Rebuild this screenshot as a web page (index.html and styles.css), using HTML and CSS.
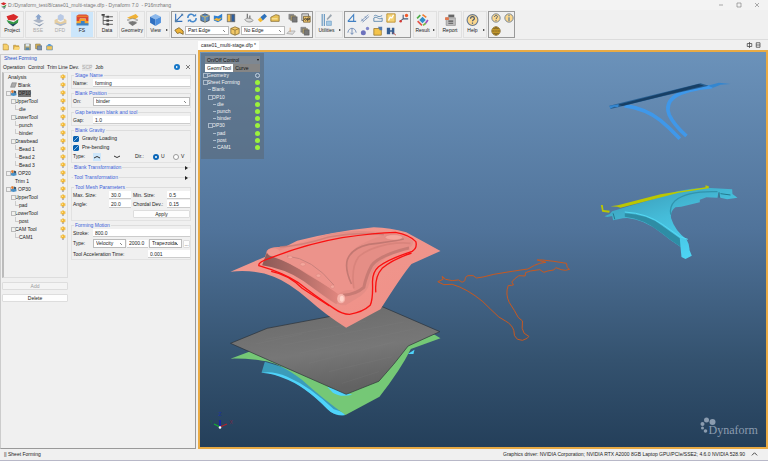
FILE: index.html
```
<!DOCTYPE html>
<html lang="en">

<head>
    <meta charset="UTF-8">
    <title>Dynaform 7.0</title>
    <link rel="stylesheet" href="styles.css">
</head>

<body>

    <!-- shared icons -->
    <svg class="defs" width="0" height="0">
        <symbol id="bulb" viewBox="0 0 12 12">
            <path d="M6 0v2M1 2l1.500 1.500M11 2L9.500 3.500M0 6h2M10 6h2" stroke="#e8b848" stroke-width="1.500"/>
            <circle cx="6" cy="5.500" r="4" fill="#f3b52c"/><circle cx="5" cy="4.500" r="1.500" fill="#ffe79a"/>
            <path d="M4.500 9h3v2.500h-3z" fill="#8a8a94"/>
        </symbol>
        <symbol id="cube" viewBox="0 0 24 24">
            <path d="M12 1l10 5-10 5L2 6z" fill="#8db9ec"/><path d="M2 6l10 5v12L2 17z" fill="#2f6fc0"/><path d="M22 6l-10 5v12l10-6z" fill="#4d8fdd"/>
        </symbol>
        <symbol id="question" viewBox="0 0 24 24">
            <circle cx="12" cy="12" r="10" fill="#fbd78d" stroke="#68788c" stroke-width="2"/>
            <path d="M8.500 9.500c0-5 7-4.500 7-.5 0 2.500-3.500 2.500-3.500 5.500M12 16.500v2.500" fill="none" stroke="#46566c" stroke-width="2.200"/>
        </symbol>
        <symbol id="stack" viewBox="0 0 24 24">
            <path d="M2 3h12v12H2z" fill="#8d8d8d" stroke="#666"/><path d="M6 6h12v12H6z" fill="#b3a06c" stroke="#666"/><path d="M10 9h12v13H10z" fill="#777" stroke="#444"/>
        </symbol>
        <symbol id="op" viewBox="0 0 18 16">
            <path d="M1 9l7-3 9 3v5l-8 2-8-2z" fill="#4990c6"/><path d="M2 2l6-2 2 5-5 4z" fill="#e77a2d"/><path d="M10 1l6 2v6l-6-2z" fill="#35566f"/>
        </symbol>
    </svg>

    <header class="titlebar">
        <svg class="logo" viewBox="0 0 24 24"><path d="M2 6l10-5 10 4-9 6z" fill="#d32b2b"/><path d="M2 12l8 3 12-6-2 6-9 4z" fill="#348c3b"/><path d="M5 18l7 2 8-3-5 6z" fill="#22435a"/></svg>
        <h1>D:/Dynaform_test/8/case01_multi-stage.dfp - Dynaform 7.0 &nbsp;- P16mzhang</h1>
        <div class="window-buttons">
            <button aria-label="Minimize"><svg viewBox="0 0 6 6"><path d="M1 3h4"/></svg></button>
            <button aria-label="Maximize"><svg viewBox="0 0 6 6"><path d="M1 1h4v4H1z"/></svg></button>
            <button aria-label="Close"><svg viewBox="0 0 6 6"><path d="M1 1l4 4M5 1L1 5"/></svg></button>
        </div>
    </header>

    <nav class="toolbar">
        <div class="group">
            <button class="tool"><svg viewBox="0 0 24 24"><path d="M1 5l13-4 9 5-7 7-12-1z" fill="#d82a2a"/><path d="M1 12l6 2 7 2 9-6-1 7-8 5-10-5z" fill="#349744"/><path d="M4 17l8 3 9-3-8 7z" fill="#234b60"/></svg>Project</button>
        </div>
        <div class="group wide">
            <button class="tool off"><svg viewBox="0 0 24 24"><path d="M6 7l6-6 6 6h-3v5H9V7z" fill="#8ba5cc"/><path d="M2 13l9-3 11 3-9 5z" fill="#aab4c5"/><path d="M1 17l12 4 10-4-9 7z" fill="#8b9ab0"/></svg>BSE</button>
            <button class="tool off"><svg viewBox="0 0 24 24"><path d="M7 4l5-3 6 3v7l-6 3-5-3z" fill="#b9c9e4"/><path d="M1 12l6-3v5l5 2 6-2V9l5 3v7l-11 4-11-4z" fill="#e5cda0"/><path d="M3 17l9 3 10-3v2l-10 4-9-4z" fill="#a9b9d4"/></svg>DFD</button>
            <button class="tool on"><svg viewBox="0 0 24 24"><path d="M1 4l4-2h14l4 2v10h-5V9H7v5H1z" fill="#dc4631"/><path d="M1 14h5v-3l3-2h7l3 3v2h4v6H1z" fill="#f4a22b"/><path d="M1 18h8v-4h7v4h7v4H1z" fill="#3c83c5"/><path d="M2 5h20" stroke="#f4a22b" stroke-width="1.500"/></svg>FS</button>
        </div>
        <div class="group slim">
            <button class="tool"><svg viewBox="0 0 24 24"><path d="M4 2v18h7M4 6h7M4 13h7M15 6h7M15 13h7M15 20h7" stroke="#444" fill="none" stroke-width="1.500"/><g fill="#444"><path d="M1 1h6v3H1zM10 4h5v4h-5zM10 11h5v4h-5zM10 18h5v4h-5z"/></g></svg>Data</button>
        </div>
        <div class="group wide">
            <button class="tool"><svg viewBox="0 0 24 24"><path d="M2 8l16-7 5 5-9 7z" fill="#f0b237"/><path d="M2 12l10-3 10 3-10 5z" fill="#ececec" stroke="#777"/><path d="M4 17l8-3 9 3-9 6z" fill="#777"/></svg>Geometry</button>
        </div>
        <div class="group more">
            <button class="tool"><svg><use href="#cube"/></svg>View</button>
        </div>

        <div class="box edit">
            <div class="line">
                <svg viewBox="0 0 12 12"><path d="M2 1v9h8M2 10l8-8" stroke="#2e6cb8" stroke-width="1.300" fill="none"/><path d="M8 1h3v3zM1 8h3v3H1z" fill="#507da7"/></svg>
                <svg viewBox="0 0 12 12"><path d="M1 6c0-5 6-6 8-2M11 6c0 5-6 6-8 2" stroke="#4689cd" stroke-width="1.800" fill="none"/><path d="M7 4h4V1zM5 8H1v3z" fill="#4689cd"/></svg>
                <svg viewBox="0 0 12 12"><path d="M6 1l5 2v6l-5 2-5-2V3z" fill="#5a8cc3" stroke="#3c4c5d"/><path d="M1 3l5 2 5-2M6 5v6" stroke="#e2bd58" fill="none"/></svg>
                <svg viewBox="0 0 12 12"><path d="M1 3l5 1 5-3v7l-5 3-5-2z" fill="#2e7fd1"/><path d="M1 8l3-2 3 1 4-2-4 5z" fill="#f2b337"/></svg>
                <svg viewBox="0 0 12 12"><path d="M1 1h10v10H1z" fill="#777"/><path d="M2 2h3v8H2z" fill="#f2bf4e"/><path d="M7 2h3v8H7z" fill="#2e5f9e"/></svg>
                <i class="sep"></i>
                <svg viewBox="0 0 12 12"><path d="M4 1v6M7 3v5" stroke="#777" stroke-width="1.500"/><path d="M1 8c2-3 8-2 10 1-3 3-8 2-10-1z" fill="#ddd" stroke="#888"/></svg>
                <svg viewBox="0 0 12 12"><path d="M4 5l5-4 3 3-5 5z" fill="#2f72ba"/><path d="M1 8l3-3 3 4-3 2z" fill="#f3ba35"/></svg>
                <svg viewBox="0 0 12 12"><path d="M1 5l6-3 4 1v7H1z" fill="#e8c157" stroke="#8d7236"/><path d="M2 7h7" stroke="#fff4bd"/></svg>
                <i class="sep"></i>
                <svg><use href="#stack"/></svg>
                <svg viewBox="0 0 12 12"><path d="M1 1h8v8H1z" fill="#ddd" stroke="#666"/><path d="M3 4h8v7H3z" fill="#f6c96a" stroke="#766136"/><circle cx="5.500" cy="7.500" r="1.200" fill="none" stroke="#333"/><path d="M8 10V6h2v2H8" fill="none" stroke="#333"/></svg>
            </div>
            <div class="line">
                <svg viewBox="0 0 12 12"><path d="M1 5l5-3 5 4v4l-4-2-3 1z" fill="#edb33a" stroke="#7c6229"/></svg>
                <select class="pick" aria-label="Part edge"><option>Part Edge</option></select>
                <svg viewBox="0 0 12 12"><path d="M6 1l5 2v6l-5 2-5-2V3z" fill="#f2c867" stroke="#8d7236"/><path d="M1 3l5 2 5-2M6 5v6" stroke="#8d7236" fill="none"/></svg>
                <select class="pick" aria-label="No edge"><option>No Edge</option></select>
                <svg viewBox="0 0 12 12"><path d="M1 9l3-3h7l-3 4z" fill="#ddd" stroke="#aaa"/><path d="M5 2v5" stroke="#e0a05e"/></svg>
                <svg class="last"><use href="#stack"/></svg>
            </div>
        </div>

        <div class="group more roomy">
            <button class="tool"><svg viewBox="0 0 24 24"><path d="M4 1v22M8 1v22" stroke="#5e91bd" stroke-width="2"/><path d="M12 10L20 1l2 3-8 8z" fill="#9ba5af"/><path d="M12 14h9v8h-9z" fill="#a6cae4" stroke="#5e91bd"/></svg>Utilities</button>
        </div>

        <div class="box measure">
            <div class="line">
                <svg viewBox="0 0 12 12"><path d="M1 10h10M1 10l7-8v8" stroke="#4180c3" stroke-width="1.300" fill="none"/></svg>
                <svg viewBox="0 0 12 12"><path d="M1 10l9-8M3 11l8-7M2 7l2 3M6 4l2 3" stroke="#738fb7" fill="none"/></svg>
                <svg viewBox="0 0 12 12"><path d="M1 4c3-4 4 3 10-1M1 10V6c4-3 5 3 10 0v4z" stroke="#527fa9" fill="none"/></svg>
                <svg viewBox="0 0 12 12"><path d="M1 1h10v10H1z" fill="#f4d274" stroke="#b88c2d"/><path d="M3 9l2-4 2 1 2-4" stroke="#fff" fill="none" stroke-width="1.500"/></svg>
                <svg viewBox="0 0 12 12"><path d="M5 2v5l-4 3M5 7h6" stroke="#485b76" fill="none" stroke-width="1.300"/><circle cx="9" cy="3" r="2" fill="#f1592b"/><circle cx="2" cy="10" r="1.500" fill="#d73a35"/></svg>
            </div>
            <div class="line">
                <svg viewBox="0 0 12 12"><path d="M1 8c1-7 9-7 10 0M6 3v7M4 8l2 2 2-2" stroke="#6381b0" fill="none"/></svg>
                <svg viewBox="0 0 12 12"><circle cx="4" cy="8" r="3" fill="#6d72bd"/><circle cx="9" cy="3" r="2" fill="#8288cc"/></svg>
                <svg viewBox="0 0 12 12"><path d="M1 3h9v8H1z" fill="#f4c44c" stroke="#9c7d36"/><path d="M6 1h5v4H8z" fill="#557caf"/></svg>
                <svg viewBox="0 0 12 12"><path d="M1 2h4v3h2V2h3v8H7V7H5v3H1z" fill="#345e93"/><path d="M8 8l4 3" stroke="#c04c3e"/></svg>
            </div>
        </div>

        <div class="group more">
            <button class="tool"><svg viewBox="0 0 24 24"><path d="M12 6l6 6-6 6-6-6z" fill="#308fc8"/><g fill="none" stroke-width="3"><path d="M2 9l6-6" stroke="#4fae49"/><path d="M12 2l7 5" stroke="#ef7d32"/><path d="M22 12l-5 7" stroke="#a04dc1"/><path d="M3 14l8 8" stroke="#e45348"/><path d="M13 22l5-4" stroke="#79bc49"/></g></svg>Result</button>
        </div>
        <div class="group">
            <button class="tool"><svg viewBox="0 0 24 24"><path d="M4 8h17v14H4z" fill="#bfbfbf" stroke="#777"/><path d="M8 2h11v5H8z" fill="#666"/><path d="M2 7h7v5H2z" fill="#e0754b"/><path d="M8 14h9M8 18h9" stroke="#555" stroke-width="2"/></svg>Report</button>
        </div>
        <div class="group more">
            <button class="tool"><svg><use href="#question"/></svg>Help</button>
        </div>

        <div class="box help">
            <div class="line">
                <svg><use href="#question"/></svg>
                <svg viewBox="0 0 24 24"><circle cx="12" cy="12" r="10" fill="#fbd78d" stroke="#68788c" stroke-width="2"/><path d="M12 5v3M12 10v9" stroke="#5f7f9c" stroke-width="3"/></svg>
            </div>
            <div class="line">
                <svg viewBox="0 0 24 24"><circle cx="12" cy="12" r="10" fill="#e2af2b" stroke="#775e26" stroke-width="2"/><path d="M2 12h20M12 2v20M5 6h14M5 18h14M12 2c-7 5-7 15 0 20M12 2c7 5 7 15 0 20" stroke="#775e26" stroke-width="1.500" fill="none"/></svg>
            </div>
        </div>
    </nav>

    <main class="workspace">
        <section class="side">
            <div class="filebar">
                <svg viewBox="0 0 12 12"><path d="M2 1h6l3 3v7H2z" fill="#f8d16b" stroke="#a98437"/></svg>
                <svg viewBox="0 0 12 12"><path d="M1 3h4l1 1h4v6H1z" fill="#e3b445" stroke="#a98437"/><path d="M3 6h9l-2 5H1z" fill="#fad778"/></svg>
                <svg viewBox="0 0 12 12"><path d="M1 1h10v10H1z" fill="#b6a66f" stroke="#69777c"/><path d="M3 1h6v4H3z" fill="#dce7ee"/><path d="M3 7h6v4H3z" fill="#5688ad"/></svg>
                <svg viewBox="0 0 12 12"><path d="M1 1h8v8H1z" fill="#e2b64e" stroke="#7b7047"/><path d="M4 4h8v7H4z" fill="#7e94ad" stroke="#59687c"/></svg>
                <svg viewBox="0 0 12 12"><path d="M1 4h10v7H1z" fill="#f0c45b" stroke="#4a82b0"/><path d="M2 4c1-4 5-4 7-2l1 2" fill="#4b93d4"/></svg>
            </div>

            <div class="dock">
                <h2>Sheet Forming</h2>
                <div class="tabs">
                    <button class="active">Operation</button>
                    <button>Control</button>
                    <button>Trim Line Dev.</button>
                    <button class="off" disabled>SCP</button>
                    <button>Job</button>
                    <span class="dock-buttons">
                        <svg viewBox="0 0 12 12"><circle cx="6" cy="6" r="6" fill="#1476c8"/><path d="M4 3.500l4 2.500-4 2.500z" fill="#fff"/></svg>
                        <svg viewBox="0 0 12 12"><path d="M2 2l8 8M10 2l-8 8" stroke="#555" stroke-width="1.500"/></svg>
                    </span>
                </div>

                <div class="columns">
                    <div class="left">
                        <ul class="tree">
                            <li class="l0"><span>Analysis</span><svg><use href="#bulb"/></svg></li>
                            <li class="l1"><svg class="op" viewBox="0 0 18 16"><path d="M5 2h12l-4 12H1z" fill="#aaa" stroke="#555"/></svg><span>Blank</span><svg><use href="#bulb"/></svg></li>
                            <li class="l1 open"><svg class="op"><use href="#op"/></svg><span class="selected">OP10</span><svg><use href="#bulb"/></svg></li>
                            <li class="l2 open"><span>UpperTool</span><svg><use href="#bulb"/></svg></li>
                            <li class="l3"><span>die</span><svg><use href="#bulb"/></svg></li>
                            <li class="l2 open"><span>LowerTool</span><svg><use href="#bulb"/></svg></li>
                            <li class="l3"><span>punch</span><svg><use href="#bulb"/></svg></li>
                            <li class="l3"><span>binder</span><svg><use href="#bulb"/></svg></li>
                            <li class="l2 open"><span>Drawbead</span><svg><use href="#bulb"/></svg></li>
                            <li class="l3"><span>Bead 1</span><svg><use href="#bulb"/></svg></li>
                            <li class="l3"><span>Bead 2</span><svg><use href="#bulb"/></svg></li>
                            <li class="l3"><span>Bead 3</span><svg><use href="#bulb"/></svg></li>
                            <li class="l1 open"><svg class="op"><use href="#op"/></svg><span>OP20</span><svg><use href="#bulb"/></svg></li>
                            <li class="l2"><span>Trim 1</span><svg><use href="#bulb"/></svg></li>
                            <li class="l1 open"><svg class="op"><use href="#op"/></svg><span>OP30</span><svg><use href="#bulb"/></svg></li>
                            <li class="l2 open"><span>UpperTool</span><svg><use href="#bulb"/></svg></li>
                            <li class="l3"><span>pad</span><svg><use href="#bulb"/></svg></li>
                            <li class="l2 open"><span>LowerTool</span><svg><use href="#bulb"/></svg></li>
                            <li class="l3"><span>post</span><svg><use href="#bulb"/></svg></li>
                            <li class="l2 open"><span>CAM Tool</span><svg><use href="#bulb"/></svg></li>
                            <li class="l3"><span>CAM1</span><svg><use href="#bulb"/></svg></li>
                        </ul>
                        <button class="push" disabled>Add</button>
                        <button class="push">Delete</button>
                    </div>

                    <form class="right">
                        <fieldset>
                            <legend>Stage Name</legend>
                            <div class="row"><label for="name">Name:</label><input id="name" type="text" value="forming"></div>
                        </fieldset>
                        <fieldset>
                            <legend>Blank Position</legend>
                            <div class="row tall"><label for="on">On:</label><select id="on"><option>binder</option></select></div>
                        </fieldset>
                        <fieldset>
                            <legend>Gap between blank and tool</legend>
                            <div class="row"><label for="gap">Gap:</label><input id="gap" type="text" value="1.0"></div>
                        </fieldset>
                        <fieldset>
                            <legend>Blank Gravity</legend>
                            <div class="row tall"><input id="gravity" type="checkbox" checked><label for="gravity" class="auto">Gravity Loading</label></div>
                            <div class="row tall"><input id="bend" type="checkbox" checked><label for="bend" class="auto">Pre-bending</label></div>
                            <div class="row tall">
                                <label>Type:</label>
                                <button type="button" class="curve on" aria-label="Up"><svg viewBox="0 0 8 8"><path d="M1 5q3-3 6 0"/></svg></button>
                                <button type="button" class="curve" aria-label="Down"><svg viewBox="0 0 8 8"><path d="M1 3q3 3 6 0"/></svg></button>
                                <span class="dir">Dir.:</span>
                                <input id="u" type="radio" name="dir" checked><label for="u" class="uv">U</label>
                                <input id="v" type="radio" name="dir"><label for="v" class="uv">V</label>
                            </div>
                        </fieldset>
                        <fieldset class="closed"><legend>Blank Transformation</legend><i></i></fieldset>
                        <fieldset class="closed"><legend>Tool Transformation</legend><i></i></fieldset>
                        <fieldset>
                            <legend>Tool Mesh Parameters</legend>
                            <div class="mesh">
                                <label for="max">Max. Size:</label><input id="max" type="text" value="30.0">
                                <label for="min">Min. Size:</label><input id="min" type="text" value="0.5">
                                <label for="angle">Angle:</label><input id="angle" type="text" value="20.0">
                                <label for="chord">Chordal Dev.:</label><input id="chord" type="text" value="0.15">
                                <button type="button" class="push apply">Apply</button>
                            </div>
                        </fieldset>
                        <fieldset>
                            <legend>Forming Motion</legend>
                            <div class="row"><label for="stroke">Stroke:</label><input id="stroke" type="text" value="800.0"></div>
                            <div class="row motion">
                                <label for="type">Type:</label><select id="type"><option>Velocity</option></select>
                                <input type="text" value="2000.0" aria-label="Velocity">
                                <select class="shape" aria-label="Profile"><option>Trapezoida</option></select>
                                <button type="button" class="push dots">...</button>
                            </div>
                            <div class="row"><label for="time" class="long">Tool Acceleration Time:</label><input id="time" type="text" value="0.001"></div>
                        </fieldset>
                    </form>
                </div>
            </div>
        </section>

        <section class="document">
            <div class="doc-tabs">
                <span class="doc-tab">case01_multi-stage.dfp *</span>
                <svg viewBox="0 0 20 8"><path d="M1 2h6v4H1zM4 0v8M13 1h5v6h-5zM13 4h5" stroke="#444" fill="none"/></svg>
            </div>
            <div class="view">
                <svg class="scene" viewBox="200 52 565 395">
                    <defs>
                        <linearGradient id="pink" x1="0" y1="0" x2="1" y2="1"><stop offset="0" stop-color="#f19b92"/><stop offset="1" stop-color="#ef8f86"/></linearGradient>
                        <linearGradient id="wall" x1="0" y1="0" x2="1" y2="0"><stop offset="0" stop-color="#8c5a57"/><stop offset=".6" stop-color="#b9716b"/><stop offset="1" stop-color="#e0867e"/></linearGradient>
                        <linearGradient id="steel" x1="0" y1="0" x2="0.300" y2="1"><stop offset="0" stop-color="#696969"/><stop offset=".6" stop-color="#777"/><stop offset="1" stop-color="#626262"/></linearGradient>
                        <linearGradient id="aqua" x1="0" y1="0" x2=".6" y2="1"><stop offset="0" stop-color="#3995b1"/><stop offset=".5" stop-color="#45bcd9"/><stop offset="1" stop-color="#4dd4f4"/></linearGradient>
                    </defs>

                    <!-- die, blank and punch stack -->
                    <g transform="translate(225 220) scale(.3333)">
                        <path d="M118 425L200 450L300 520L355 586Q330 588 312 572Q235 495 175 472Q145 460 108 458z" fill="#3b9cba"/>
                        <path d="M108 458Q145 452 185 470Q255 500 325 568L358 578V586Q325 588 305 567Q235 496 175 475Q150 462 108 458z" fill="#4fd4fb"/>
                        <path d="M15 416L75 394L625 343L645 355L556 387Q525 450 462 530L360 585Q290 535 230 480Q160 426 110 422Q65 415 15 416z" fill="#75c876"/>
                        <path d="M305 500L380 524Q345 533 322 518z" fill="#4fd4fb"/>
                        <path d="M547 402l20-13-3 13z" fill="#4fd4fb"/>
                        <path d="M15 370L125 325L470 260L643 335L548 378Q505 435 460 484L362 523z" fill="url(#steel)" stroke="#2b3036" stroke-width="2"/>
                        <path d="M120 358L420 304M170 376L535 306M220 400L570 326M250 430L510 365M310 455L500 410M90 372L230 342M350 490L460 455" stroke="#858585" stroke-width="1" opacity=".5"/>
                        <path d="M15 155L120 110L215 62Q330 34 445 22Q495 24 542 37Q590 63 645 93L558 132Q530 165 465 268L362 323Q300 284 250 239Q190 187 145 170Q90 148 15 155z" fill="url(#pink)"/>
                        <path d="M112 135Q119 110 124 92Q135 80 160 81Q215 78 300 44Q400 25 475 38Q540 42 562 62Q566 78 545 87Q480 105 452 140Q437 157 432 190Q425 220 390 238L360 256Q342 256 320 246Q260 203 224 173Q175 143 112 135z" fill="#e58e86"/>
                        <path d="M110 136L124 98L145 112Q190 126 245 163Q291 190 336 218Q340 240 333 253Q300 232 235 184Q180 146 110 136z" fill="url(#wall)"/>
                        <path d="M135 104Q220 63 310 46Q410 30 480 45Q440 54 402 76Q356 106 369 155Q381 185 386 212Q360 206 338 222Q270 175 230 151Q185 124 135 104z" fill="#ec938b"/>
                        <path d="M163 81Q230 77 310 51Q400 35 475 44" fill="none" stroke="#c87a74" stroke-width="5" opacity=".7"/>
                        <path d="M378 192Q357 146 366 118Q380 83 430 73Q495 66 535 57" fill="none" stroke="#b46f69" stroke-width="5" opacity=".7"/>
                        <path d="M385 205Q376 142 399 111Q425 86 485 73Q530 66 555 70" fill="none" stroke="#d9847c" stroke-width="5"/>
                        <path d="M353 226Q393 222 415 202Q423 165 439 136Q461 106 551 84" fill="none" stroke="#b46e69" stroke-width="9" opacity=".6"/>
                        <path d="M185 108Q260 115 325 195" fill="none" stroke="#c9817b" stroke-width="3"/>
                        <g fill="#f4a69c" stroke="#cf8079" stroke-width="1"><ellipse cx="194" cy="112" rx="7" ry="4"/><ellipse cx="232" cy="133" rx="8" ry="5"/><ellipse cx="279" cy="167" rx="7" ry="5"/><ellipse cx="321" cy="200" rx="6" ry="5"/><ellipse cx="505" cy="52" rx="26" ry="8"/></g>
                        <ellipse cx="144" cy="97" rx="19" ry="12" fill="#ef9990"/>
                        <ellipse cx="347" cy="236" rx="12" ry="14" fill="#f5b3aa"/>
                        <ellipse cx="349" cy="236" rx="6" ry="9" fill="#ffd5cb"/>
                        <path d="M100 137Q97 127 130 116Q240 72 350 53Q450 38 510 37Q552 44 571 65Q576 84 560 94Q490 117 459 140Q441 156 441 185Q443 239 434 256Q412 277 372 283Q350 283 326 266Q265 225 217 187Q170 157 100 137z" fill="none" stroke="#fa1111" stroke-width="4"/>
                        <path d="M137 154Q190 164 230 205L312 258M451 217Q447 170 470 145Q500 119 558 99" fill="none" stroke="#fa1111" stroke-width="4"/>
                    </g>

                    <g transform="translate(430 70) scale(.3333)">
                        <!-- trim curve -->
                        <path d="M22 635L38 628L35 619L45 628L65 632L84 630L95 637L103 632L105 622L112 617L128 617L138 624L158 621L190 613L245 604L292 597L312 586L328 580L346 577L320 570L335 570L370 574L408 580L410 592L417 598L405 601L392 599L376 593L370 600L352 603L340 607L328 599L300 603L285 608L284 618L265 617L252 627L244 636L249 645L233 647Q224 672 236 697L252 722L263 742L276 753L275 775L281 790L295 799L290 805L276 811L261 808L252 797L250 782Q245 764 225 753L205 741Q180 718 157 695Q110 656 65 643L40 644z" fill="none" stroke="#c8581f" stroke-width="3"/>
                        <!-- upper pad -->
                        <path d="M582 107Q645 116 690 151Q720 176 748 206" fill="none" stroke="#3f98ea" stroke-width="11"/>
                        <path d="M845 50Q762 58 731 81Q704 102 716 134Q730 164 768 198" fill="none" stroke="#3f98ea" stroke-width="11"/>
                        <path d="M537 107L555 103L810 40L835 47L700 78L556 113L540 117z" fill="#285f91"/>
                        <path d="M562 104L805 42L820 47L575 108z" fill="#173f65"/>
                        <path d="M832 47L865 38L900 42L870 44L848 53zM537 107l28-4-2 9-12-2-12 6z" fill="#3486cf"/>
                        <!-- lower post -->
                        <path d="M522 439L538 432L545 424L580 413L680 384L740 364Q785 353 840 354L905 358L906 372L921 383L890 388L870 383L864 366L861 383L828 382L808 389V397L752 410L735 412Q718 425 722 445Q733 482 768 508Q778 525 777 540L784 557L765 567L753 561L750 530Q720 512 690 487Q640 448 590 444L577 445L548 451L545 438L530 441z" fill="url(#aqua)"/>
                        <path d="M583 430Q650 433 695 467L748 505L750 530Q720 512 690 487Q640 446 583 440z" fill="#2e8da5"/>
                        <path d="M861 365Q770 362 734 392Q716 410 721 434" fill="none" stroke="#3194ad" stroke-width="4"/>
                        <path d="M583 426Q650 430 697 464L748 500L772 508" fill="none" stroke="#54d9f4" stroke-width="3"/>
                        <path d="M866 367v16M870 371l30 4M548 430l5 18" stroke="#22798e" stroke-width="3"/>
                        <path d="M511 405h6l2 15 19 2-2 6-21-3zM540 409L562 406L690 373L825 352V346L835 349V355L745 368L570 413L560 410z" fill="#bbc702"/>
                    </g>

                    <!-- axis triad -->
                    <g fill="none" stroke-width="1.300"><path d="M219.500 427v-7" stroke="#1414c8"/><path d="M219.500 427l7-3" stroke="#b3222d"/><path d="M219.500 427l-6-3" stroke="#15ad31"/></g>
                    <circle cx="219.500" cy="427.500" r="1.300" fill="#fff"/>
                    <g font-size="5"><text x="218" y="416" fill="#1b2fa0">Z</text><text x="229" y="424" fill="#7a2742">X</text><text x="209" y="424" fill="#17683c">Y</text></g>

                    <!-- brand -->
                    <g fill="#8b9caf"><circle cx="702" cy="424" r="2"/><circle cx="706" cy="420" r="2.500"/><circle cx="712" cy="422" r="3"/><circle cx="702" cy="428" r="1.500"/><circle cx="705" cy="431" r="1.800"/></g>
                    <text class="brand" x="708" y="434">Dynaform</text>
                </svg>

                <div class="control">
                    <button class="control-head">On/Off Control</button>
                    <div class="control-tabs"><button class="active">Geom/Tool</button><button>Curve</button></div>
                    <ul>
                        <li class="c0 open">Geometry<i class="hollow"></i></li>
                        <li class="c0 open">Sheet Forming<i></i></li>
                        <li class="c1">Blank<i></i></li>
                        <li class="c1 open">OP10<i></i></li>
                        <li class="c2">die<i></i></li>
                        <li class="c2">punch<i></i></li>
                        <li class="c2">binder<i></i></li>
                        <li class="c1 open">OP30<i></i></li>
                        <li class="c2">pad<i></i></li>
                        <li class="c2">post<i></i></li>
                        <li class="c2">CAM1<i></i></li>
                    </ul>
                </div>
            </div>
        </section>
    </main>

    <footer class="status">
        <span>|| Sheet Forming</span>
        <span class="driver">Graphics driver: NVIDIA Corporation; NVIDIA RTX A2000 8GB Laptop GPU/PCIe/SSE2; 4.6.0 NVIDIA 528.90</span>
        <svg viewBox="0 0 8 8"><path d="M1 5l3-3 3 3" stroke="#333" fill="none"/></svg>
    </footer>

</body>

</html>
```
FILE: styles.css
```
* {
    box-sizing: border-box;
}

body {
    margin: 0;
    height: 100vh;
    display: flex;
    flex-direction: column;
    overflow: hidden;
    background: #f0f0f0;
    color: #222;
    font: 5px/7px "Liberation Sans", Arial, sans-serif;
}

button, input, select {
    font: inherit;
    color: inherit;
    margin: 0;
    padding: 0;
    border: 0;
    background: none;
}

h1, h2, ul {
    margin: 0;
    padding: 0;
    font: inherit;
    list-style: none;
}

svg {
    display: block;
    flex: none;
}

.defs {
    position: absolute;
}

/* title bar */
.titlebar {
    display: flex;
    align-items: center;
    height: 10px;
    flex: none;
    background: #f3f3f3;
    color: #777;
}

.logo {
    width: 7px;
    height: 7px;
    margin-right: 1px;
}

.window-buttons {
    display: flex;
    gap: 12px;
    margin-left: auto;
    padding-right: 8px;
}

.window-buttons svg {
    width: 6px;
    height: 6px;
    fill: none;
    stroke: #777;
    stroke-width: .6;
}

/* toolbar */
.toolbar {
    display: flex;
    flex: none;
    gap: 1px;
    height: 30px;
    padding: 1px 1px 1px 0;
    border-bottom: 1px solid #dcdcdc;
}

.group {
    display: flex;
    border: 1px solid #e0e0e0;
}

.group.wide {
    padding: 0 1px;
}

.group.more::after {
    content: "";
    align-self: center;
    margin: 10px 1px 0 2px;
    border: 1px solid transparent;
    border-left: 2px solid #222;
    border-right: 0;
}

.tool {
    display: flex;
    flex-direction: column;
    align-items: center;
    justify-content: flex-start;
    min-width: 22px;
    padding-top: 1px;
}

.group.slim .tool {
    min-width: 20px;
}

.group.more .tool {
    min-width: 17px;
}

.group.roomy .tool {
    min-width: 21px;
}

.tool svg {
    width: 13px;
    height: 14px;
}

.tool.off {
    color: #aaa;
}

.tool.on {
    background: #cce6fb;
}

.box {
    display: flex;
    flex-direction: column;
    justify-content: space-around;
    margin-right: 1px;
    border: 1px solid #999;
    padding: 0 2px;
}

.line {
    display: flex;
    align-items: center;
    gap: 3px;
}

.line svg {
    width: 10px;
    height: 10px;
}

.edit {
    width: 142px;
}

.edit .line:last-child {
    gap: 1px;
}

.edit .last {
    margin-left: auto;
}

.measure {
    width: 67px;
}

.help {
    width: 27px;
}

.sep {
    width: 1px;
    height: 10px;
    margin: 0 1px;
    background: #ccc;
}

select {
    appearance: none;
    height: 9px;
    padding: 0 2px;
    border: 1px solid #bbb;
    background: #fff linear-gradient(45deg, transparent 45%, #888 45%, #888 60%, transparent 60%) no-repeat right 3px center / 2px 2px;
}

.pick {
    width: 44px;
}

/* left panel */
.workspace {
    display: flex;
    flex: 1;
    min-height: 0;
}

.side {
    display: flex;
    flex-direction: column;
    flex: none;
    width: 198px;
    padding-right: 2px;
}

.filebar {
    display: flex;
    align-items: center;
    gap: 4px;
    height: 14px;
    padding-left: 2px;
}

.filebar svg {
    width: 7px;
    height: 8px;
}

.dock {
    flex: 1;
    border: 1px solid #ccc;
    border-right: 1px solid #999;
    border-bottom: 1px solid #999;
    padding: 0 4px 0 1px;
}

h2 {
    padding-left: 2px;
    color: #1d4fc4;
}

legend {
    padding: 0 1px;
    margin-left: 1px;
    height: 7px;
    color: #3a5fd9;
}

.tabs {
    display: flex;
    align-items: center;
    height: 10px;
    gap: 3px;
    padding-left: 1px;
}

.tabs .off {
    color: #aaa;
    background: #e6e6e6;
}

.dock-buttons {
    display: flex;
    gap: 5px;
    margin-left: auto;
}

.dock-buttons svg {
    width: 6px;
    height: 6px;
}

.columns {
    display: flex;
    gap: 3px;
}

.left {
    display: flex;
    flex-direction: column;
    gap: 4px;
    width: 66px;
}

.tree {
    height: 206px;
    border: 1px solid #ddd;
    border-left: 2px solid #bbb;
}

.tree li {
    position: relative;
    display: flex;
    align-items: center;
    height: 8px;
    padding-right: 1px;
}

.tree svg {
    width: 6px;
    height: 6px;
    margin-left: auto;
}

.tree .op {
    width: 7px;
    height: 6px;
    margin: 0 1px 0 0;
}

.l0 {
    padding-left: 4px;
}

.l1 {
    padding-left: 6px;
}

.l2 {
    padding-left: 11px;
}

.l3 {
    padding-left: 15px;
}

.tree .open::before {
    content: "";
    position: absolute;
    left: 2px;
    width: 3px;
    height: 3px;
    border: 1px solid #bbb;
}

.tree .l2.open::before {
    left: 7px;
}

.tree .l3::before {
    content: "";
    position: absolute;
    left: 11px;
    top: 0;
    width: 3px;
    height: 4px;
    border-left: 1px solid #ccc;
    border-bottom: 1px solid #ccc;
}

.selected {
    background: #777;
}

.push {
    height: 8px;
    border: 1px solid #ddd;
    border-radius: 1px;
    background: #fdfdfd;
    line-height: 6px;
}

.push:disabled {
    color: #999;
    background: #f4f4f4;
}

/* stage settings */
.right {
    flex: 1;
    min-width: 0;
}

fieldset {
    min-width: 0;
    margin: 0 0 1px;
    padding: 0 0 1px 1px;
    border: 1px solid #e2e2e2;
    border-top-color: #ddd;
}

.row {
    display: flex;
    align-items: center;
    height: 8px;
}

.row.tall {
    height: 9px;
}

.row label {
    width: 20px;
}

.row .auto {
    width: auto;
    padding-left: 3px;
}

input[type="text"] {
    flex: 1;
    width: 20px;
    min-width: 0;
    height: 8px;
    padding: 0 2px;
    border-bottom: 1px solid #ccc;
    background: #fff;
}

.row select {
    flex: 1;
}

input[type="checkbox"], input[type="radio"] {
    appearance: none;
    width: 6px;
    height: 6px;
    border: 1px solid #999;
    border-radius: 50%;
    background: #fff;
}

input[type="checkbox"] {
    border-radius: 1px;
    border-color: #0a62b0;
    background: linear-gradient(135deg, #0a62b0 40%, #8fbde4 40%, #8fbde4 60%, #0a62b0 60%);
}

input[type="radio"]:checked {
    border: 2px solid #0a66b8;
}

.curve {
    width: 8px;
    height: 8px;
    margin-right: 12px;
}

.curve.on {
    background: #cce6fb;
}

.curve svg {
    fill: none;
    stroke: #333;
}

.dir {
    width: 18px;
    margin-left: 2px;
}

.row .uv {
    width: 14px;
    padding-left: 2px;
}

.row .uv:last-child {
    width: 8px;
}

.closed {
    position: relative;
    height: 8px;
    margin-bottom: 2px;
    padding: 0;
    border-color: #ddd transparent transparent;
}

.closed i {
    position: absolute;
    right: 2px;
    top: -5px;
    border: 2px solid transparent;
    border-left: 3px solid #222;
    border-right: 0;
}

.mesh {
    display: grid;
    grid-template-columns: 36px 22px 36px 1fr;
    gap: 1px 0;
    align-items: center;
    padding-bottom: 1px;
}

.mesh input {
    width: 100%;
}

.mesh label:nth-of-type(even) {
    padding-left: 2px;
}

.apply {
    grid-column: 3 / 5;
    margin: 1px 0 0 2px;
}

.motion {
    height: 9px;
    margin: 2px 0;
    gap: 1px;
}

.motion label {
    width: 19px;
}

.row.motion select {
    flex: none;
    width: 33px;
    padding-right: 0;
}

.motion .dots {
    width: 7px;
}

.row .long {
    width: 75px;
}

/* document area */
.document {
    display: flex;
    flex-direction: column;
    flex: 1;
    min-width: 0;
}

.doc-tabs {
    display: flex;
    justify-content: space-between;
    align-items: center;
    height: 10px;
    padding-right: 6px;
}

.doc-tab {
    padding: 1px 3px;
    background: #fff;
}

.doc-tabs svg {
    width: 16px;
    height: 6px;
}

.view {
    position: relative;
    flex: 1;
    min-height: 0;
    border: 2px solid #e9ab45;
    background: linear-gradient(#6b92ba, #50739a 45%, #34526f 78%, #243f5a);
}

.scene {
    position: absolute;
    inset: 0;
    width: 100%;
    height: 100%;
}

.brand {
    font: 12px "Liberation Serif", serif;
    fill: #8b9caf;
}

/* floating on/off panel */
.control {
    position: absolute;
    left: 1px;
    top: 1px;
    width: 63px;
    height: 106px;
    padding: 3px 4px 0 4px;
    background: rgba(90, 105, 120, .6);
    color: #f2f2f2;
}

.control-head {
    display: flex;
    align-items: center;
    justify-content: space-between;
    width: 100%;
    height: 8px;
    padding: 0 1px 0 2px;
    background: #7d8792;
    color: #111;
}

.control-head::after {
    content: "";
    border: 1px solid transparent;
    border-top: 2px solid #111;
    border-bottom: 0;
}

.control-tabs {
    display: flex;
    background: #858585;
    color: #111;
}

.control-tabs button {
    height: 8px;
    padding: 0 2px;
}

.control-tabs .active {
    background: #fff;
}

.control ul {
    display: grid;
    grid-auto-rows: 1fr;
    height: 79px;
}

.control li {
    position: relative;
    display: flex;
    align-items: center;
}

.control li i {
    width: 5px;
    height: 5px;
    margin-left: auto;
    border-radius: 50%;
    background: #9bf23c;
}

.control li .hollow {
    border: 1px solid #c4d3e2;
    background: none;
}

.c0 {
    padding-left: 2px;
}

.c1 {
    padding-left: 7px;
}

.c2 {
    padding-left: 12px;
}

.control li::before {
    content: "";
    position: absolute;
    left: -2px;
    width: 3px;
    height: 1px;
    background: #a9b9c9;
}

.control .c1::before {
    left: 3px;
}

.control .c2::before {
    left: 8px;
}

.control .open::before {
    height: 3px;
    border: 1px solid #a9b9c9;
    background: none;
}

/* status line */
.status {
    display: flex;
    align-items: center;
    flex: none;
    height: 12px;
    padding: 0 10px 0 4px;
    border-bottom: 1px solid #b8b8c8;
}

.driver {
    margin-left: auto;
}

.status svg {
    width: 7px;
    height: 7px;
    margin-left: 6px;
}
```
